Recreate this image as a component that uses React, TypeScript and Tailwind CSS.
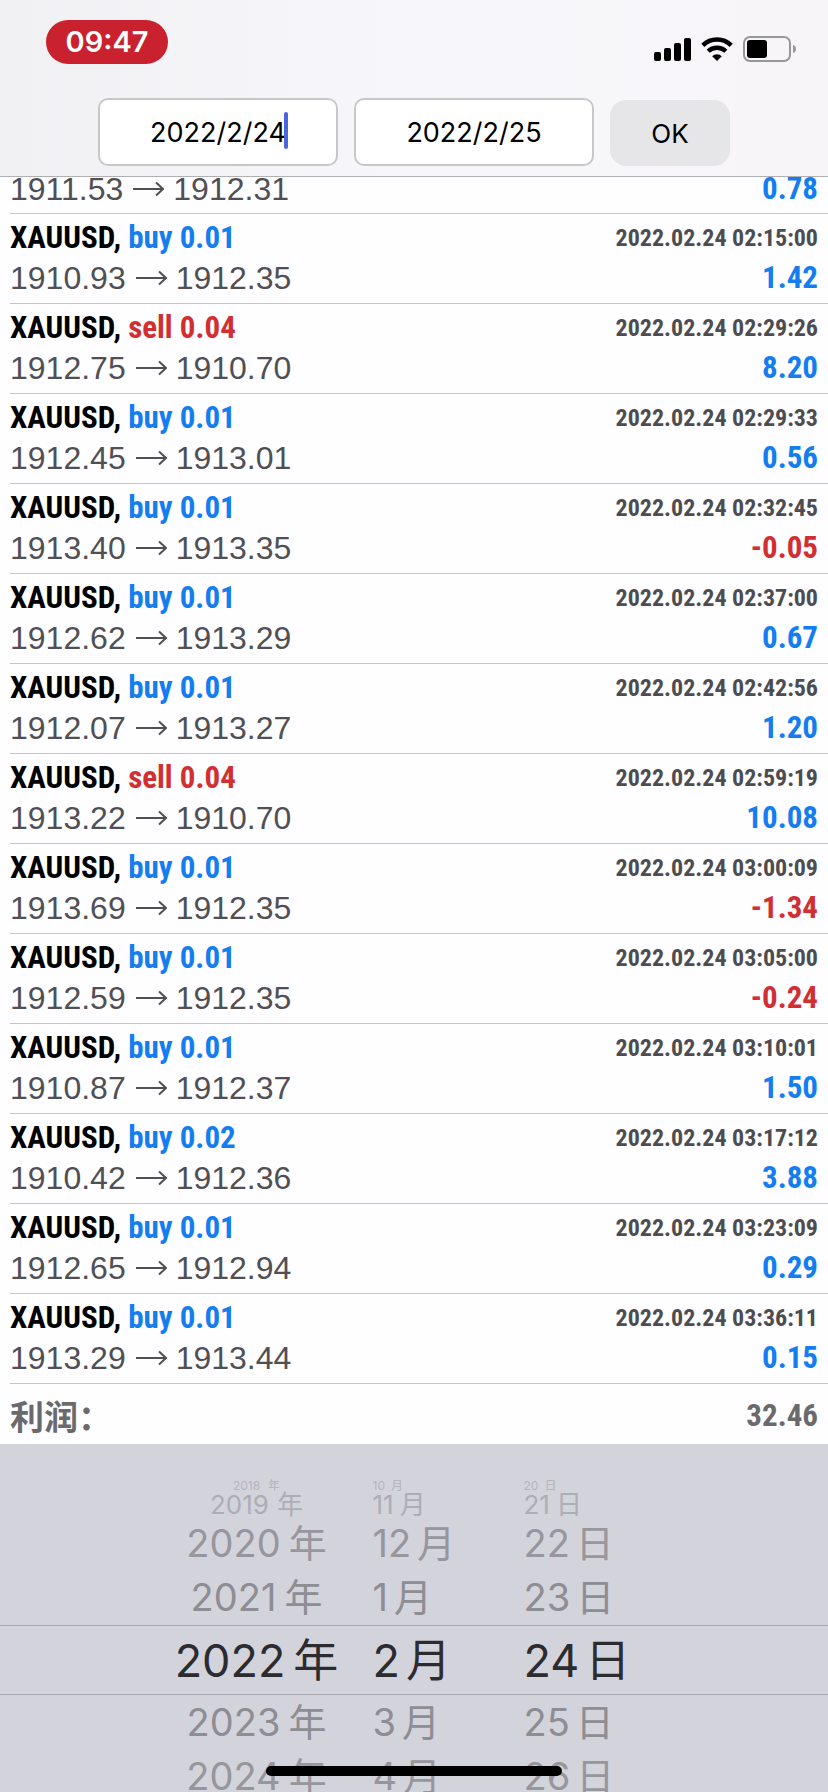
import { useState } from 'react';
import clsx from 'clsx';

type Deal = {
    side: 'buy' | 'sell';
    volume: string;
    open: string;
    close: string;
    time: string;
    profit: string;
};

const deals: Deal[] = [
    { side: 'buy', volume: '0.01', open: '1910.93', close: '1912.35', time: '2022.02.24 02:15:00', profit: '1.42' },
    { side: 'sell', volume: '0.04', open: '1912.75', close: '1910.70', time: '2022.02.24 02:29:26', profit: '8.20' },
    { side: 'buy', volume: '0.01', open: '1912.45', close: '1913.01', time: '2022.02.24 02:29:33', profit: '0.56' },
    { side: 'buy', volume: '0.01', open: '1913.40', close: '1913.35', time: '2022.02.24 02:32:45', profit: '-0.05' },
    { side: 'buy', volume: '0.01', open: '1912.62', close: '1913.29', time: '2022.02.24 02:37:00', profit: '0.67' },
    { side: 'buy', volume: '0.01', open: '1912.07', close: '1913.27', time: '2022.02.24 02:42:56', profit: '1.20' },
    { side: 'sell', volume: '0.04', open: '1913.22', close: '1910.70', time: '2022.02.24 02:59:19', profit: '10.08' },
    { side: 'buy', volume: '0.01', open: '1913.69', close: '1912.35', time: '2022.02.24 03:00:09', profit: '-1.34' },
    { side: 'buy', volume: '0.01', open: '1912.59', close: '1912.35', time: '2022.02.24 03:05:00', profit: '-0.24' },
    { side: 'buy', volume: '0.01', open: '1910.87', close: '1912.37', time: '2022.02.24 03:10:01', profit: '1.50' },
    { side: 'buy', volume: '0.02', open: '1910.42', close: '1912.36', time: '2022.02.24 03:17:12', profit: '3.88' },
    { side: 'buy', volume: '0.01', open: '1912.65', close: '1912.94', time: '2022.02.24 03:23:09', profit: '0.29' },
    { side: 'buy', volume: '0.01', open: '1913.29', close: '1913.44', time: '2022.02.24 03:36:11', profit: '0.15' },
];

// wheel rows get smaller and paler the further they are from the selected one
const wheelRows = [
    { year: '2018', month: '10', day: '20', style: 'h-3 text-[12px] text-[#b4b4bb]' },
    { year: '2019', month: '11', day: '21', style: 'h-[26px] text-[26px] text-[#adadb4]' },
    { year: '2020', month: '12', day: '22', style: 'h-[50px] text-[38px] text-[#96969c]' },
    { year: '2021', month: '1', day: '23', style: 'h-[57px] text-[38px] text-[#8d8d93]' },
    { year: '2022', month: '2', day: '24', style: 'h-[70px] border-y border-[#a9a9b1] text-[45px] text-[#2b2b30]', selected: true },
    { year: '2023', month: '3', day: '25', style: 'h-[54px] text-[38px] text-[#8d8d93]' },
    { year: '2024', month: '4', day: '26', style: 'h-[54px] text-[38px] text-[#96969c]' },
];

export default function App() {
    const [from, setFrom] = useState('2022/2/24');
    const [to, setTo] = useState('2022/2/25');

    return (
        <div className="relative flex h-screen flex-col overflow-hidden bg-[#fefdff] font-['Inter','Noto_Sans_CJK_SC',sans-serif]">
            <header className="shrink-0 border-b border-[#b0b0b3] bg-linear-to-r from-[#f1f0f3] via-[#f7f7fb] to-[#f7f5f8]">
                <StatusBar />
                <form className="flex items-end justify-center gap-4 pb-[10px]" onSubmit={(e) => e.preventDefault()}>
                    <DateField label="From" value={from} onChange={setFrom} active />
                    <DateField label="To" value={to} onChange={setTo} />
                    <button type="submit" className="h-[66px] w-[120px] rounded-2xl bg-[#e6e5e8] text-[26px] text-black">
                        OK
                    </button>
                </form>
            </header>

            <main className="flex min-h-0 flex-1 flex-col justify-end overflow-hidden">
                <ul className="pl-[10px]">
                    <li className="flex h-[37px] items-end border-b border-[#c6c6c9] pr-[10px] pb-1">
                        <PriceLine open="1911.53" close="1912.31" profit="0.78" />
                    </li>
                    {deals.map((deal) => (
                        <DealRow key={deal.time} deal={deal} />
                    ))}
                </ul>
                <div className="flex h-[60px] shrink-0 items-center justify-between px-[10px] pt-1 text-[#6a6a6d]">
                    <span className="font-['Noto_Sans_CJK_SC',sans-serif] text-[34px] leading-none font-bold">利润：</span>
                    <span className="font-['Roboto_Condensed','Roboto',sans-serif] text-[31px] font-bold">32.46</span>
                </div>
            </main>

            <DateWheel />

            <div className="absolute bottom-4 left-1/2 h-[10px] w-[296px] -translate-x-1/2 rounded-full bg-black" />
        </div>
    );
}

function StatusBar() {
    return (
        <div className="flex h-[98px] items-start justify-between pt-5 pr-8 pl-[46px]">
            <div className="flex h-11 w-[122px] items-center justify-center rounded-full bg-[#c9212d] text-[29px] font-semibold text-white">
                09:47
            </div>
            <div className="flex items-center gap-[10px] pt-4">
                <svg width="37" height="24" viewBox="0 0 37 24" className="text-black" fill="currentColor">
                    <rect x="0" y="15" width="7" height="9" rx="2" />
                    <rect x="10" y="11" width="7" height="13" rx="2" />
                    <rect x="20" y="6" width="7" height="18" rx="2" />
                    <rect x="30" y="1" width="7" height="23" rx="2" />
                </svg>
                <svg width="32" height="24" viewBox="0 0 32 24" fill="none" stroke="currentColor" className="text-black">
                    <path d="M1.8 8.4a20.2 20.2 0 0 1 28.4 0" strokeWidth="4.4" />
                    <path d="M7.2 14.3a12.6 12.6 0 0 1 17.6 0" strokeWidth="4.4" />
                    <path d="M16 24l-4.8-4.8a6.8 6.8 0 0 1 9.6 0z" fill="currentColor" stroke="none" />
                </svg>
                <svg width="53" height="26" viewBox="0 0 53 26">
                    <rect x="1" y="1" width="46" height="24" rx="6" fill="none" stroke="#97979a" strokeWidth="2" />
                    <rect x="4" y="4" width="20" height="18" rx="3" fill="#000" />
                    <path d="M50 9c4 1 4 7 0 8z" fill="#97979a" />
                </svg>
            </div>
        </div>
    );
}

type DateFieldProps = {
    label: string;
    value: string;
    onChange: (value: string) => void;
    active?: boolean;
};

function DateField({ label, value, onChange, active }: DateFieldProps) {
    return (
        <div className="relative">
            <input
                type="text"
                aria-label={label}
                value={value}
                onChange={(e) => onChange(e.target.value)}
                className="block h-[68px] w-[240px] rounded-[10px] border-2 border-[#c8c8cb] bg-white text-center text-[27px] text-black outline-none"
            />
            {active && <span className="absolute top-[14px] left-[186px] h-[37px] w-1 rounded-full bg-[#4d65dc]" />}
        </div>
    );
}

function DealRow({ deal }: { deal: Deal }) {
    return (
        <li className="flex h-[90px] flex-col border-b border-[#c6c6c9] pt-1 pr-[10px]">
            <div className="flex h-10 items-center justify-between font-['Roboto_Condensed','Roboto',sans-serif] font-bold">
                <span className="text-[31px] text-black">
                    XAUUSD,{' '}
                    <span className={deal.side === 'buy' ? 'text-[#147ef0]' : 'text-[#d22f33]'}>
                        {deal.side} {deal.volume}
                    </span>
                </span>
                <span className="text-[24px] text-[#4d4c50]">{deal.time}</span>
            </div>
            <PriceLine open={deal.open} close={deal.close} profit={deal.profit} />
        </li>
    );
}

function PriceLine({ open, close, profit }: { open: string; close: string; profit: string }) {
    return (
        <div className="flex w-full items-center justify-between leading-10">
            <span className="flex items-center font-['Liberation_Sans',sans-serif] text-[32px] leading-10 text-[#505054]">
                {open}
                <Arrow />
                {close}
            </span>
            <span
                className={clsx(
                    "font-['Roboto_Condensed','Roboto',sans-serif] text-[31px] leading-10 font-bold",
                    profit.startsWith('-') ? 'text-[#d22f33]' : 'text-[#147ef0]'
                )}
            >
                {profit}
            </span>
        </div>
    );
}

function Arrow() {
    return (
        <svg width="31" height="16" viewBox="0 0 31 16" fill="none" stroke="currentColor" strokeWidth="2" className="mr-[9px] ml-[10px]">
            <path d="M0 8h30M23 1.5l7 6.5-7 6.5" />
        </svg>
    );
}

function DateWheel() {
    return (
        <div className="h-[348px] shrink-0 overflow-hidden bg-[#d3d3dc] pt-9" role="listbox" aria-label="Date">
            {wheelRows.map((row) => (
                <div
                    key={row.year}
                    role="option"
                    aria-selected={!!row.selected}
                    className={clsx('flex items-center justify-center pr-5 leading-none', row.style)}
                >
                    <div className="flex w-[200px] justify-center gap-2">
                        <span>{row.year}</span>
                        <span>年</span>
                    </div>
                    <div className="flex w-[151px] gap-[6px] pl-4">
                        <span>{row.month}</span>
                        <span>月</span>
                    </div>
                    <div className="flex w-[144px] gap-[6px] pl-4">
                        <span>{row.day}</span>
                        <span>日</span>
                    </div>
                </div>
            ))}
        </div>
    );
}
